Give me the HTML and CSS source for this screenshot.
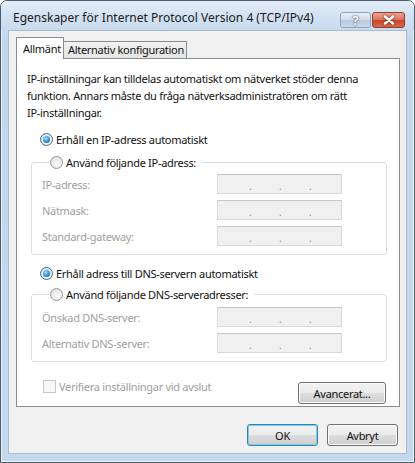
FILE: index.html
```html
<!DOCTYPE html>
<html lang="sv">
<head>
<meta charset="utf-8">
<title>Egenskaper för Internet Protocol Version 4 (TCP/IPv4)</title>
<link rel="stylesheet" href="styles.css">
</head>
<body>
<div class="window">
  <div class="titlebar">
    <span class="title">Egenskaper för Internet Protocol Version 4 (TCP/IPv4)</span>
    <div class="caption-btns">
      <div class="cbtn help">?</div>
      <div class="cbtn close">
        <svg width="14" height="10" viewBox="0 0 14 10"><path d="M3 1.5 L11 8.5 M11 1.5 L3 8.5" stroke="#fff" stroke-width="2.4" stroke-linecap="round"/></svg>
      </div>
    </div>
  </div>
  <div class="client">
    <div class="tabs">
      <div class="tab active">Allmänt</div>
      <div class="tab">Alternativ konfiguration</div>
    </div>
    <div class="panel">
      <p class="desc">IP-inställningar kan tilldelas automatiskt om nätverket stöder denna funktion. Annars måste du fråga nätverksadministratören om rätt IP-inställningar.</p>

      <div class="radio-row first"><span class="radio checked"></span><span>Erhåll en IP-adress automatiskt</span></div>
      <div class="group">
        <div class="legend"><span class="radio"></span><span>Använd följande IP-adress:</span></div>
        <div class="field"><span class="flabel">IP-adress:</span><span class="ipbox"><i>.</i><i>.</i><i>.</i></span></div>
        <div class="field"><span class="flabel">Nätmask:</span><span class="ipbox"><i>.</i><i>.</i><i>.</i></span></div>
        <div class="field"><span class="flabel">Standard-gateway:</span><span class="ipbox"><i>.</i><i>.</i><i>.</i></span></div>
      </div>

      <div class="radio-row second"><span class="radio checked"></span><span>Erhåll adress till DNS-servern automatiskt</span></div>
      <div class="group dns">
        <div class="legend"><span class="radio"></span><span>Använd följande DNS-serveradresser:</span></div>
        <div class="field"><span class="flabel">Önskad DNS-server:</span><span class="ipbox"><i>.</i><i>.</i><i>.</i></span></div>
        <div class="field"><span class="flabel">Alternativ DNS-server:</span><span class="ipbox"><i>.</i><i>.</i><i>.</i></span></div>
      </div>

      <div class="bottom-row">
        <div class="check-row"><span class="checkbox"></span><span>Verifiera inställningar vid avslut</span></div>
        <div class="btn adv">Avancerat...</div>
      </div>
    </div>
    <div class="footer">
      <div class="btn default">OK</div>
      <div class="btn">Avbryt</div>
    </div>
  </div>
</div>
</body>
</html>
```

FILE: styles.css
```css
* { box-sizing: border-box; }
html, body { margin: 0; padding: 0; background: #fff; }
body {
  font-family: "Noto Sans", "Open Sans", sans-serif;
  font-size: 11px;
  letter-spacing: -0.3px;
  color: #111;
}
.window {
  width: 415px;
  height: 463px;
  border: 1px solid #4b5a6c;
  border-radius: 7px 7px 0 0;
  background: linear-gradient(#d9e6f4, #c3d7ed 40px, #c4d8ee);
  display: flex;
  flex-direction: column;
  box-shadow: inset 0 0 0 1px #eef5fc;
}
.titlebar {
  height: 29px;
  display: flex;
  align-items: center;
  padding: 0 9px 0 12px;
  background: linear-gradient(#e3edf8, #d3e2f2 50%, #c9dbef);
  border-radius: 6px 6px 0 0;
}
.title {
  flex: 1;
  font-size: 12px;
  letter-spacing: 0;
  color: #1a1a1a;
  padding-top: 3px;
  white-space: nowrap;
}
.caption-btns {
  display: flex;
  gap: 1px;
  margin-top: 9px;
}
.cbtn {
  height: 16px;
  border-radius: 3px;
  display: flex;
  align-items: center;
  justify-content: center;
}
.help {
  width: 31px;
  border: 1px solid #8ea3bb;
  background: linear-gradient(#e8eff7, #cfdbe8 50%, #b8c9dc 51%, #cddaea);
  color: #fff;
  font-weight: bold;
  font-size: 13px;
  letter-spacing: 0;
  text-shadow: 0 0 2px #41556e, 0 0 1px #41556e;
}
.close {
  width: 33px;
  border: 1px solid #9a3a2c;
  background: linear-gradient(#eaa690, #d9735c 50%, #c6452c 51%, #d76a4a);
}
.close svg { filter: drop-shadow(0 0 1px #6a1d10); }

.client {
  flex: 1;
  margin: 0 7px 8px 7px;
  background: #f0f0f0;
  border: 1px solid #a9bccf;
  padding: 6px 6px 0 7px;
  display: flex;
  flex-direction: column;
}
.tabs {
  display: flex;
  align-items: flex-end;
  height: 21px;
  position: relative;
  z-index: 1;
}
.tab {
  height: 17px;
  padding: 0 2px 0 4px;
  border: 1px solid #898c95;
  border-bottom: none;
  border-left: none;
  background: linear-gradient(#f2f2f2, #e4e4e4);
  line-height: 15px;
  white-space: nowrap;
}
.tab.active {
  height: 22px;
  width: 48px;
  border-left: 1px solid #898c95;
  background: #fff;
  padding: 0 0 0 6px;
  line-height: 21px;
  margin-bottom: -1px;
}
.panel {
  height: 349px;
  background: #fff;
  border: 1px solid #898c95;
  padding: 11px 13px 0 10px;
  display: flex;
  flex-direction: column;
}
.desc {
  margin: 0;
  line-height: 17px;
  width: 332px;
}
.radio-row, .legend, .check-row {
  display: flex;
  align-items: center;
  gap: 3px;
  white-space: nowrap;
}
.radio-row { margin-left: 13px; height: 16px; }
.radio-row.first { margin-top: 10px; }
.radio-row.second { margin-top: 10px; }
.radio {
  width: 13px;
  height: 13px;
  border-radius: 50%;
  border: 1px solid #979797;
  background: radial-gradient(circle at 60% 65%, #fbfbfb, #e8e8e8 60%, #d4d4d4);
  display: inline-flex;
  align-items: center;
  justify-content: center;
  flex: none;
}
.radio.checked { border-color: #3d6d99; }
.radio.checked::after {
  content: "";
  width: 7px;
  height: 7px;
  border-radius: 50%;
  background: radial-gradient(circle at 40% 35%, #a8e1fb, #2d8ed7 55%, #0d4f8f);
}
.group {
  margin: 15px 0 0 4px;
  border: 1px solid #d5dfe5;
  border-radius: 3px;
  padding: 0 12px 8px 10px;
  width: 356px;
}
.group.dns { margin-top: 13px; }
.legend {
  margin: -9px 0 0 8px;
  background: #fff;
  width: fit-content;
  padding-right: 6px;
  height: 16px;
}
.field {
  display: flex;
  align-items: center;
  height: 20px;
  margin-top: 6px;
  color: #a0a0a0;
}
.flabel { width: 175px; flex: none; }
.group .legend + .field { margin-top: 4px; }
.group.dns .legend + .field { margin-top: 5px; }
.ipbox {
  width: 125px;
  height: 20px;
  border: 1px solid #d9d9d9;
  border-top-color: #c6c6c6;
  background: #f0f0f0;
  display: flex;
  padding-left: 31px;
  gap: 26px;
  line-height: 22px;
}
.ipbox i { font-style: normal; color: #8a8a8a; font-size: 10px; width: 4px; }
.bottom-row {
  display: flex;
  justify-content: space-between;
  align-items: flex-start;
  margin-top: 17px;
  padding-left: 16px;
}
.check-row { color: #a0a0a0; }
.checkbox {
  width: 13px;
  height: 13px;
  border: 1px solid #c8c8c8;
  background: #f7f7f7;
  flex: none;
}
.btn {
  height: 22px;
  width: 71px;
  border: 1px solid #707070;
  border-radius: 3px;
  background: linear-gradient(#f2f2f2, #ebebeb 50%, #dddddd 51%, #cfcfcf);
  display: flex;
  align-items: center;
  justify-content: center;
  box-shadow: inset 0 0 0 1px #fcfcfc;
}
.btn.adv { width: 88px; margin-top: 3px; }
.footer {
  display: flex;
  justify-content: flex-end;
  gap: 9px;
  padding-top: 17px;
  padding-right: 2px;
}
.btn.default {
  border-color: #3c7fb1;
  box-shadow: inset 0 0 0 1px #6fd0f5;
}
```
